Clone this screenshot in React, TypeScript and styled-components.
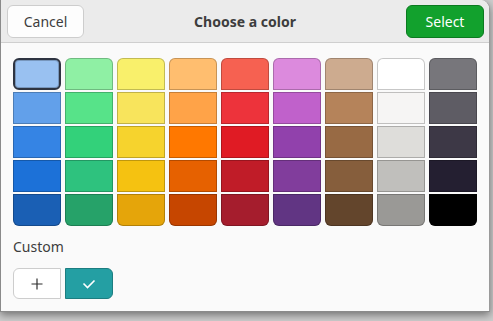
import { createGlobalStyle, styled } from "styled-components";

const GlobalStyle = createGlobalStyle`
  html, body {
    margin: 0;
    padding: 0;
    background-color: #cdcdcd;
    font-family: "Noto Sans", "DejaVu Sans", sans-serif;
  }
`;

const Page = styled.div`
  width: 493px;
  height: 321px;
  overflow: hidden;
  position: relative;
`;

const Dialog = styled.div`
  width: 490px;
  height: 312px;
  box-sizing: border-box;
  border-left: 1px solid #8a8a8a;
  border-right: 1px solid #9a9a9a;
  border-bottom: 1px solid #8a8a8a;
  border-top-right-radius: 9px;
  background-color: #fafafa;
  overflow: hidden;
  display: flex;
  flex-direction: column;
  box-shadow: 0 3px 9px rgba(0, 0, 0, 0.45);
`;

const HeaderBar = styled.div`
  height: 43px;
  box-sizing: border-box;
  background-color: #ebebeb;
  border-bottom: 1px solid #cfcfcf;
  display: flex;
  flex-direction: row;
  align-items: flex-start;
  justify-content: space-between;
  padding: 5px 5px 0 6px;
`;

const Button = styled.div<{ $suggested?: boolean }>`
  width: ${(p) => (p.$suggested ? "78px" : "77px")};
  height: 33px;
  box-sizing: border-box;
  border-radius: 6px;
  display: flex;
  align-items: center;
  justify-content: center;
  font-size: 14px;
  background-color: ${(p) => (p.$suggested ? "#12a12d" : "#fdfdfd")};
  color: ${(p) => (p.$suggested ? "#ffffff" : "#3d3d3d")};
  border: 1px solid ${(p) => (p.$suggested ? "#0b7a20" : "#cdcdcd")};
`;

const Title = styled.div`
  align-self: center;
  margin-top: -5px;
  font-size: 14px;
  font-weight: 700;
  color: #3d3d3d;
`;

const Body = styled.div`
  flex: 1;
  display: flex;
  flex-direction: column;
  padding: 15px 12px 0;
`;

const Palette = styled.div`
  display: grid;
  grid-template-columns: repeat(9, 48px);
  grid-auto-rows: 32px;
  column-gap: 4px;
  row-gap: 2px;
`;

const Swatch = styled.div<{ $color: string; $row: number; $selected?: boolean }>`
  background-color: ${(p) => p.$color};
  box-sizing: border-box;
  box-shadow: inset 0 0 0 1px rgba(0, 0, 0, 0.22);
  border-radius: ${(p) =>
    p.$selected
      ? "6px"
      : p.$row === 0
        ? "6px 6px 0 0"
        : p.$row === 4
          ? "0 0 6px 6px"
          : "0"};
  border: ${(p) => (p.$selected ? "2px solid #2e3441" : "none")};
`;

const CustomLabel = styled.div`
  margin-top: 11px;
  font-size: 14px;
  color: #3d3d3d;
  line-height: 20px;
`;

const CustomRow = styled.div`
  margin-top: 11px;
  display: flex;
  flex-direction: row;
  gap: 4px;
`;

const AddButton = styled.div`
  width: 48px;
  height: 31px;
  box-sizing: border-box;
  border: 1px solid #cdcdcd;
  border-radius: 6px 0 0 6px;
  background-color: #ffffff;
  display: flex;
  align-items: center;
  justify-content: center;
`;

const CustomSwatch = styled.div`
  width: 48px;
  height: 31px;
  box-sizing: border-box;
  border: 1px solid #1c7d80;
  border-radius: 0 6px 6px 0;
  background-color: #249fa3;
  display: flex;
  align-items: center;
  justify-content: center;
`;

const shades = [
  ["#99c1f1", "#8ff0a4", "#f9f06b", "#ffbe6f", "#f66151", "#dc8add", "#cdab8f", "#ffffff", "#77767b"],
  ["#62a0ea", "#57e389", "#f8e45c", "#ffa348", "#ed333b", "#c061cb", "#b5835a", "#f6f5f4", "#5e5c64"],
  ["#3584e4", "#33d17a", "#f6d32d", "#ff7800", "#e01b24", "#9141ac", "#986a44", "#deddda", "#3d3846"],
  ["#1c71d8", "#2ec27e", "#f5c211", "#e66100", "#c01c28", "#813d9c", "#865e3c", "#c0bfbc", "#241f31"],
  ["#1a5fb4", "#26a269", "#e5a50a", "#c64600", "#a51d2d", "#613583", "#63452c", "#9a9996", "#000000"],
];

const App = () => {
  return (
    <Page>
      <GlobalStyle />
      <Dialog>
        <HeaderBar>
          <Button>Cancel</Button>
          <Title>Choose a color</Title>
          <Button $suggested>Select</Button>
        </HeaderBar>
        <Body>
          <Palette>
            {shades.map((row, r) =>
              row.map((c, i) => (
                <Swatch key={`${r}-${i}`} $color={c} $row={r} $selected={r === 0 && i === 0} />
              ))
            )}
          </Palette>
          <CustomLabel>Custom</CustomLabel>
          <CustomRow>
            <AddButton>
              <svg width="12" height="12" viewBox="0 0 12 12">
                <path d="M6 0.5v11M0.5 6h11" stroke="#2e2e2e" strokeWidth="1.2" fill="none" />
              </svg>
            </AddButton>
            <CustomSwatch>
              <svg width="14" height="10" viewBox="0 0 14 10">
                <path d="M1.5 4.5l4 4 7-7" stroke="#ffffff" strokeWidth="1.6" fill="none" />
              </svg>
            </CustomSwatch>
          </CustomRow>
        </Body>
      </Dialog>
    </Page>
  );
};

export default App;
